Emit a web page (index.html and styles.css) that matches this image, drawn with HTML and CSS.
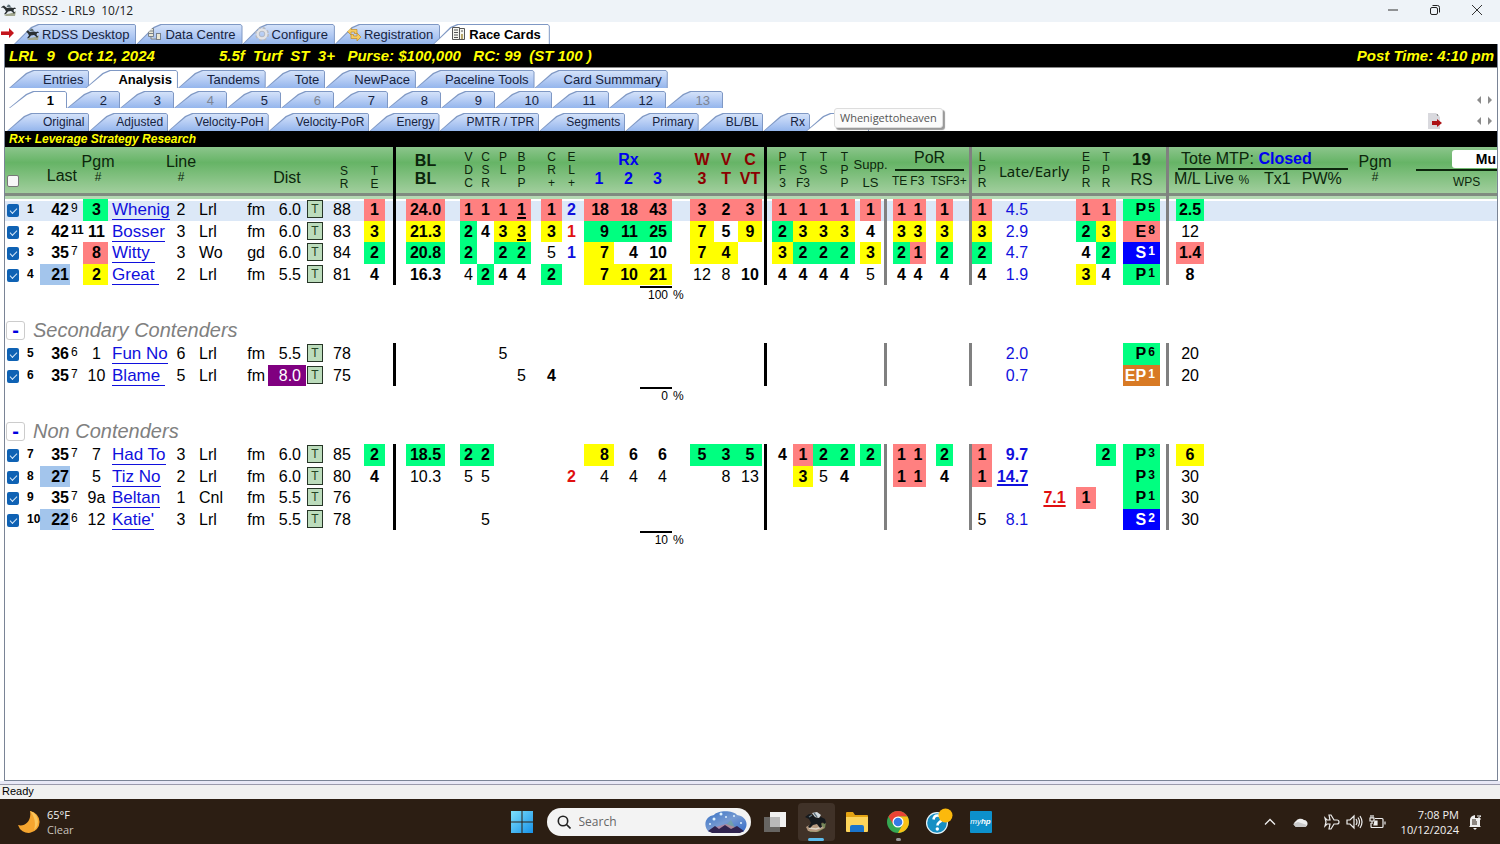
FILE: index.html
```
<!DOCTYPE html>
<html lang="en">
<head>
<meta charset="utf-8">
<title>RDSS2 - LRL9 10/12</title>
<link rel="stylesheet" href="styles.css">
</head>
<body>
<svg class="defs" width="0" height="0" aria-hidden="true">
  <symbol id="horse" viewBox="0 0 16 16">
    <path d="M3 13c3-2 9-1 12-4l-1 5H5z" fill="#a3a88f"/>
    <path d="M1 4.500l2-1 1 1 2 1.500 4-.5 2 .5 2-.5 1 1.500-2 0-.5 2 1.500 1.500-1 1.500-1-1.500-2-1.500-3 .5-2 2.500-2 .3 2-2.800-1-2-2-2-2 .5z" fill="#2b3134"/>
    <path d="M5.500 5l1.500-2.500 2 .5 1 2.500z" fill="#5d6f78"/>
  </symbol>
</svg>
<header class="titlebar">
  <svg class="icon16"><use href="#horse"/></svg>
  <h1 class="titlebar-text">RDSS2 - LRL9&nbsp; 10/12</h1>
  <div class="window-buttons">
    <button class="wbtn" aria-label="Minimize"><svg width="12" height="12" viewBox="0 0 12 12"><path d="M1 6h10" stroke="#333"/></svg></button>
    <button class="wbtn" aria-label="Restore"><svg width="12" height="12" viewBox="0 0 12 12" fill="none" stroke="#222"><rect x="1.500" y="3.500" width="7" height="7" rx="1.500"/><path d="M3.500 1.500h5a2 2 0 0 1 2 2v5"/></svg></button>
    <button class="wbtn" aria-label="Close"><svg width="12" height="12" viewBox="0 0 12 12"><path d="M1 1l10 10M11 1L1 11" stroke="#333"/></svg></button>
  </div>
</header>
<main class="frame">
  <nav class="tabs tabs-main">
    <svg class="go" width="13" height="10" viewBox="0 0 13 10"><path d="M0 3h8V0l5 5-5 5V7H0z" fill="#c3151c"/><path d="M0 3h8v1H0z" fill="#e9797c"/></svg>
    <button class="tab"><svg class="icon16"><use href="#horse"/></svg>RDSS Desktop</button>
    <button class="tab"><svg class="icon16" viewBox="0 0 16 16" fill="#e9e7d5" stroke="#77808c"><path d="M1.500 2.500h5v8h-5zM2 5h4M2 7.500h4M4 11v2h5"/><rect x="9.500" y="7.500" width="4" height="6"/></svg>Data Centre</button>
    <button class="tab"><svg class="icon16" viewBox="0 0 16 16" fill="none"><circle cx="8" cy="8" r="6" stroke="#b7bac1" stroke-width="2" stroke-dasharray="2.800 1.900"/><circle cx="8" cy="8" r="4.300" stroke="#e4e4e6" stroke-width="2.500"/><circle cx="8" cy="8" r="2.800" stroke="#b4b9c4"/></svg>Configure</button>
    <button class="tab"><svg class="icon16" viewBox="0 0 16 16" fill="#f5cc62" stroke="#c18b26" stroke-width=".7"><path d="M1 5l4-4v2.500h6v4H8.500V6H5v3z"/><path d="M15 11l-4 4v-2.500H5v-4h2.500V10H11V7z"/></svg>Registration</button>
    <button class="tab is-active"><svg class="icon16" viewBox="0 0 16 16" fill="#f5f5ef" stroke="#555"><path d="M1.500 1.500h7v12h-7zM8.500 2.500h5v11h-5zM3 4h4M3 6.500h4M3 9h4M3 11.500h4M10 5h2"/><path d="M11 8v5" stroke="#b7a66a" stroke-width="2"/></svg>Race Cards</button>
  </nav>
  <section class="card">
    <div class="racebar"><span>LRL&nbsp; 9&nbsp;&nbsp; Oct 12, 2024</span><span class="race-info">5.5f&nbsp; Turf&nbsp; ST&nbsp; 3+&nbsp;&nbsp; Purse: $100,000&nbsp;&nbsp; RC: 99&nbsp; (ST 100 )</span><span class="post">Post Time: 4:10 pm</span></div>
    <nav class="tabs tabs-section">
      <button class="tab">Entries</button><button class="tab is-active">Analysis</button><button class="tab">Tandems</button><button class="tab">Tote</button><button class="tab">NewPace</button><button class="tab">Paceline Tools</button><button class="tab">Card Summmary</button>
    </nav>
    <nav class="tabs tabs-race">
      <button class="tab is-active">1</button><button class="tab">2</button><button class="tab">3</button><button class="tab is-off">4</button><button class="tab">5</button><button class="tab is-off">6</button><button class="tab">7</button><button class="tab">8</button><button class="tab">9</button><button class="tab wide">10</button><button class="tab wide">11</button><button class="tab wide">12</button><button class="tab wide is-off">13</button>
      <span class="scroll"><svg width="15" height="8" viewBox="0 0 15 8" fill="#8b8b8b"><path d="M4 0v8L0 4zM11 0v8l4-4z"/></svg></span>
    </nav>
    <nav class="tabs tabs-view">
      <button class="tab">Original</button><button class="tab">Adjusted</button><button class="tab">Velocity-PoH</button><button class="tab">Velocity-PoR</button><button class="tab">Energy</button><button class="tab">PMTR / TPR</button><button class="tab">Segments</button><button class="tab">Primary</button><button class="tab">BL/BL</button><button class="tab">Rx</button>
      <div class="tip-anchor"><button class="tab is-active blank" aria-label="Leverage"></button><span class="tooltip" role="tooltip">Whenigettoheaven</span></div>
      <span class="scroll"><svg class="export" width="16" height="18" viewBox="0 0 16 18"><path d="M1 1h8l4 4v12H1z" fill="#d9d9de"/><path d="M10 2l1 2" stroke="#777"/><path d="M5 9h5V7l5 4-5 4v-2H5z" fill="#ad1216"/></svg><svg width="15" height="8" viewBox="0 0 15 8" fill="#8b8b8b"><path d="M4 0v8L0 4zM11 0v8l4-4z"/></svg></span>
    </nav>
    <h2 class="report-title">Rx+ Leverage Strategy Research</h2>
    <div class="sheet">
      <table class="grid">
        <colgroup>
          <col class="w17"><col class="w18"><col class="w30"><col class="w13"><col class="w25"><col class="w62"><col class="w22"><col class="w43"><col class="w33"><col class="w38"><col class="w18"><col class="w40"><col class="w21">
          <col class="w8"><col class="w13"><col class="w39"><col class="w15"><col class="w17"><col class="w17"><col class="w18"><col class="w19"><col class="w10"><col class="w21"><col class="w22"><col class="w30"><col class="w29"><col class="w29"><col class="w18"><col class="w24"><col class="w24"><col class="w24">
          <col class="w2"><col class="w8"><col class="w21"><col class="w20"><col class="w21"><col class="w21"><col class="w5"><col class="w21"><col class="w3"><col class="w9"><col class="w17"><col class="w16"><col class="w10"><col class="w17"><col class="w16"><col class="w23"><col class="w41"><col class="w43"><col class="w20"><col class="w20"><col class="w7"><col class="w37"><col class="w6"><col class="w10"><col class="w28"><col>
        </colgroup>
        <thead>
          <tr>
            <th><input type="checkbox" class="check-all" aria-label="Select all"></th>
            <th colspan="3"><div class="h low last">Last</div></th>
            <th><div class="h name-head">Pgm<small>#</small></div></th>
            <th></th>
            <th><div class="h">Line<small>#</small></div></th>
            <th colspan="2"></th>
            <th><div class="h low">Dist</div></th>
            <th></th>
            <th><div class="h v low">S<br>R</div></th>
            <th><div class="h v low">T<br>E</div></th>
            <th></th><th class="bar"></th>
            <th><div class="h two bl">BL<br>BL</div></th><th></th>
            <th><div class="h v">V<br>D<br>C</div></th>
            <th><div class="h v">C<br>S<br>R</div></th>
            <th><div class="h v">P<br>L</div></th>
            <th><div class="h v">B<br>P<br>P</div></th><th></th>
            <th><div class="h v">C<br>R<br>+</div></th>
            <th><div class="h v el">E<br>L<br>+</div></th>
            <th><div class="h two blue">&nbsp;<br>1</div></th>
            <th><div class="h two blue">Rx<br>2</div></th>
            <th><div class="h two blue">&nbsp;<br>3</div></th><th></th>
            <th><div class="h two maroon">W<br>3</div></th>
            <th><div class="h two maroon">V<br>T</div></th>
            <th><div class="h two maroon">C<br>VT</div></th>
            <th></th><th class="bar"></th>
            <th><div class="h v">P<br>F<br>3</div></th>
            <th><div class="h v">T<br>S<br>F3</div></th>
            <th><div class="h v">T<br>S</div></th>
            <th><div class="h v">T<br>P<br>P</div></th><th></th>
            <th><div class="h supp">Supp.<br>LS</div></th>
            <th></th>
            <th colspan="6"><div class="h por"><span class="por-top">PoR</span><span class="por-sub"><i>TE</i><i>F3</i><i>TSF3+</i></span></div></th>
            <th class="bar soft"><div class="h v">L<br>P<br>R</div></th>
            <th colspan="2"><div class="h late">Late/Early</div></th>
            <th><div class="h v">E<br>P<br>R</div></th>
            <th><div class="h v">T<br>P<br>R</div></th>
            <th></th>
            <th><div class="h rs"><b>19</b>RS</div></th>
            <th></th><th class="bar soft"></th>
            <th colspan="2"><div class="tote">
              <div class="tote-live"><span class="tote-top">Tote MTP: <b>Closed</b></span><span class="tote-sub">M/L Live <small>%</small><i>Tx1</i><i>PW%</i></span></div>
              <div class="h tote-pgm">Pgm<small>#</small></div>
              <div class="multi"><button class="multi-btn">Mu</button><span class="wps">WPS</span></div>
            </div></th>
          </tr>
        </thead>
        <tbody id="contenders"></tbody>
        <tbody id="secondary"></tbody>
        <tbody id="non"></tbody>
      </table>
    </div>
  </section>
</main>
<div class="status">Ready</div>
<footer class="taskbar">
  <div class="weather">
    <svg width="24" height="24" viewBox="0 0 24 24"><path d="M13 1a11 11 0 1 1-12 14c6 2 14-3 12-14z" fill="#f5a52f"/><path d="M13 1a11 11 0 0 1 4 19c2-6 1-13-4-19z" fill="#fbc65c"/></svg>
    <p>65°F<br><span>Clear</span></p>
  </div>
  <div class="apps">
    <button class="app start" aria-label="Start"><svg width="22" height="22" viewBox="0 0 22 22"><defs><linearGradient id="win" x1="0" y1="0" x2="1" y2="1"><stop offset="0" stop-color="#7ee0fb"/><stop offset="1" stop-color="#1791e8"/></linearGradient></defs><path d="M0 0h10.500v10.500H0zM11.500 0H22v10.500H11.500zM0 11.500h10.500V22H0zM11.500 11.500H22V22H11.500z" fill="url(#win)"/></svg></button>
    <label class="search">
      <svg width="14" height="14" viewBox="0 0 14 14" fill="none" stroke="#222" stroke-width="1.600"><circle cx="6" cy="6" r="4.700"/><path d="M9.500 9.500L13.500 13.500"/></svg>
      <input type="text" placeholder="Search" aria-label="Search">
      <svg width="44" height="24" viewBox="0 0 44 24"><defs><linearGradient id="sky" x1="0" y1="0" x2="1" y2="1"><stop offset="0" stop-color="#3570c5"/><stop offset=".5" stop-color="#779ad1"/><stop offset="1" stop-color="#346cc9"/></linearGradient></defs><path d="M5 22C-2 15 2 6 10 5 14 0 29 0 33 5c9 1 13 10 6 17z" fill="url(#sky)"/><path d="M17 20l10-10 5 9z" fill="#77a996" opacity=".6"/><path d="M12 17l10-3 12 4v3H12z" fill="#c58291" opacity=".7"/><path d="M4 21l7-5 4 3 6-4 6 4 6-3 7 5-4 2H8z" fill="#30234f"/><g fill="#dff2ff"><circle cx="10" cy="9" r="1.500"/><circle cx="17" cy="4" r="1.500"/><circle cx="6" cy="14" r="1"/><circle cx="30" cy="6" r="1"/><circle cx="37" cy="13" r="1"/><circle cx="22" cy="7" r="1"/></g></svg>
    </label>
    <button class="app" aria-label="Task view"><svg width="24" height="22" viewBox="0 0 24 22"><rect x="7" y="1" width="16" height="15" fill="#f1f1f1"/><rect x="1" y="6" width="16" height="15" fill="#777" opacity=".8"/><rect x="7" y="6" width="10" height="10" fill="#b9b9b9"/></svg></button>
    <button class="app is-open" aria-label="RDSS2"><svg width="24" height="24" viewBox="0 0 24 24"><path d="M3 18q6-4 10-3l9-3-1 6-7 4H6z" fill="#77885a"/><path d="M2 17l7-4 8 2 3 3-8 4-8-1z" fill="#b59a80"/><path d="M5 18l7 1 6-2" fill="none" stroke="#ded5c6" stroke-width="1.500"/><path d="M1 7l4-3 4 1 3 3 5-1 4 2 1 4-2 1-1-2-2 1 1 4-2 1-3-4-4 1-3 3-2-1 3-4-2-4-2-1z" fill="#15191d"/><path d="M8 3l5-1 4 3-2 3-4-1z" fill="#d3dbe0"/><path d="M10 3l3 4M8 5l-3 2" stroke="#5f737f" stroke-width="1.300"/></svg></button>
    <button class="app" aria-label="File Explorer"><svg width="24" height="22" viewBox="0 0 24 22"><path d="M1 2q0-1 1-1h6l2 3h12q1 0 1 1v5H1z" fill="#e3a313"/><path d="M1 6h22v14q0 1-1 1H2q-1 0-1-1z" fill="#fcd45b"/><path d="M5 21v-5q0-2 2-2h10q2 0 2 2v5z" fill="#1a74cc"/></svg></button>
    <button class="app is-running" aria-label="Chrome"><svg width="24" height="24" viewBox="0 0 24 24"><circle cx="12" cy="12" r="11" fill="#35a852"/><path d="M2.500 6.500A11 11 0 0 1 21.500 6.500H12L7.500 15z" fill="#ea4335"/><path d="M21.500 6.500A11 11 0 0 1 12 23l4.700-8.500L12 6.500z" fill="#fbc116"/><circle cx="12" cy="12" r="5.500" fill="#fff"/><circle cx="12" cy="12" r="4.300" fill="#367be6"/></svg></button>
    <button class="app" aria-label="Help"><svg width="28" height="28" viewBox="0 0 28 28"><circle cx="12" cy="15" r="11" fill="#e9f6fb"/><circle cx="12" cy="15" r="9.800" fill="#168fc4"/><path d="M8.500 11.500q.5-4 4-4 4 0 4 3.500 0 2-2.500 3.500-1.500 1-1.500 3" fill="none" stroke="#fff" stroke-width="2.600"/><circle cx="12.300" cy="21" r="1.700" fill="#fff"/><circle cx="20.500" cy="7.500" r="7" fill="#fcb90c"/></svg></button>
    <button class="app hp" aria-label="myHP">my<b>hp</b></button>
  </div>
  <div class="tray">
    <svg width="12" height="8" viewBox="0 0 12 8"><path d="M1 6.500l5-5 5 5" fill="none" stroke="#eee" stroke-width="1.300"/></svg>
    <svg class="cloud" width="17" height="12" viewBox="0 0 17 12"><path d="M4 11a4 3.500 0 0 1 0-6 5 4 0 0 1 8-1c4 0 5 6 1 7z" fill="#eee"/><path d="M1 8l5-2 9 3-2 2H4z" fill="#c9c9c9"/></svg>
    <svg width="17" height="16" viewBox="0 0 17 16" fill="none" stroke="#eee" stroke-width="1.200"><path d="M2 4l2 2h3L6 1h2l3 5h3q2 0 2 2t-2 2h-3l-3 5H6l1-5H4l-2 2 1-4z"/></svg>
    <svg width="17" height="16" viewBox="0 0 17 16" fill="none" stroke="#eee" stroke-width="1.200"><path d="M1 6h3l4-4v12l-4-4H1zM10 5q2 3 0 6M12 3.500q3 4.500 0 9M14 2q4 6 0 12"/></svg>
    <svg width="17" height="16" viewBox="0 0 17 16" fill="none" stroke="#eee" stroke-width="1.200"><path d="M6 4.500h7q1 0 1 1v7q0 1-1 1H3q-1 0-1-1V9M16 7.500v3"/><path d="M1 4h4v3H1zM2 1v3M4 1v3M3 7v3"/><path d="M6 7h2v4H5z" fill="#eee"/></svg>
    <p class="clock">7:08 PM<br>10/12/2024</p>
    <svg width="14" height="16" viewBox="0 0 14 16"><path d="M2 12V6q0-4 5-5v3h5v8l1 1H1zM5 14h4l-2 2z" fill="#eee"/><path d="M4 8h5M4 6h4M4 10h5" stroke="#2c1e13"/><path d="M9 2h4l-4 3h4" fill="none" stroke="#eee"/></svg>
  </div>
</footer>
<script src="grid.js"></script>
</body>
</html>
```
FILE: styles.css
```
* { box-sizing: border-box; }
body { margin: 0; min-height: 100vh; display: flex; flex-direction: column; background: #fff; color: #000; font-family: "Liberation Sans", Arial, sans-serif; font-size: 13px; overflow: hidden; }
button { font: inherit; color: inherit; border: 0; background: none; padding: 0; }
p, h1, h2 { margin: 0; font-weight: normal; }
.defs { position: absolute; }
.icon16 { width: 16px; height: 16px; flex: none; }

.titlebar { display: flex; align-items: center; height: 22px; padding: 0 17px 2px 1px; gap: 5px; background: #eef3f8; }
.titlebar-text { font: 12px "Open Sans", sans-serif; color: #222; }
.window-buttons { display: flex; gap: 30px; margin-left: auto; }
.wbtn { display: flex; }

.frame { flex: 1; display: flex; flex-direction: column; }
.tabs { display: flex; align-items: flex-end; }
.tab { position: relative; z-index: 0; flex: none; display: flex; align-items: center; justify-content: flex-end; gap: 2px; height: 18px; padding: 0 6px 0 29px; color: #16233f; white-space: nowrap; background: #7f98c4; clip-path: polygon(0 100%, 17px 3px, 24px 0, calc(100% - 2px) 0, 100% 2px, 100% 100%); }
.tab::before { content: ""; position: absolute; z-index: -1; inset: 1px 1px 0 1px; background: linear-gradient(#d4e2f9, #b5ccf4 50%, #94b5ec); clip-path: polygon(0 100%, 17px 3px, 24px 0, calc(100% - 1px) 0, 100% 1px, 100% 100%); }
.tab.is-active { z-index: 1; margin-left: -4px; font-weight: bold; color: #000; }
.tab.is-active::before { background: #fff; }
.tab.is-off { color: #7d8594; }
.tabs-main { height: 22px; padding-left: 1px; }
.tabs-main .tab { height: 20px; padding: 0 7px 0 11px; }
.tabs-main .tab:nth-of-type(1) { padding-left: 10px; }
.tabs-main .tab.is-active { margin-left: -7px; padding: 0 9px 0 18px; }
.go { align-self: center; }
.card { flex: 1; display: flex; flex-direction: column; margin: 0 2px 0 4px; border: 1px solid #7a8496; border-top: 0; }
.racebar { display: flex; align-items: center; height: 24px; padding: 0 3px 1px 4px; background: #000; border-bottom: 1px solid #888; color: #ff0; font-size: 15px; font-weight: bold; font-style: italic; white-space: nowrap; }
.race-info { margin-left: 64px; }
.post { margin-left: auto; }
.tabs-section { height: 20px; padding-left: 4px; }
.tabs-section .tab:first-child { padding-left: 34px; }
.tabs-section .tab.is-active { padding-left: 33px; }
.tabs-race { height: 20px; padding-left: 4px; }
.tabs-race .tab { width: 53px; height: 17px; padding: 1px 13px 0 0; }
.tabs-race .tab:nth-child(odd) { width: 54px; }
.tabs-race .tab.is-active { width: 58px; margin-left: 0; }
.tabs-race .tab.wide { width: 57px; }
.tabs-view { height: 23px; padding-left: 2px; font-size: 12px; }
.tabs-view .tab { padding: 0 5px 0 27px; }
.tabs-view .tab:first-child { padding-left: 36px; }
.tabs-view .blank { width: 63px; }
.tip-anchor { position: relative; }
.tooltip { position: absolute; z-index: 3; left: 24px; top: -5px; padding: 0 5px; font: 11px/18px "Open Sans", sans-serif; color: #555; background: #fbfbfb; border: 1px solid #ddd; border-radius: 3px; box-shadow: 2px 2px 1px #999; }
.scroll { display: flex; align-items: center; align-self: center; gap: 34px; margin-left: auto; padding: 3px 5px 0 0; }
.report-title { height: 16px; padding-left: 4px; background: #000; color: #ff0; font-size: 12px; line-height: 16px; font-weight: bold; font-style: italic; }

.sheet { flex: 1; overflow: hidden; }
.grid { width: 100%; table-layout: fixed; border-collapse: separate; border-spacing: 0; font-size: 16px; }
.w2 { width: 2px; } .w3 { width: 3px; } .w5 { width: 5px; } .w6 { width: 6px; } .w7 { width: 7px; } .w8 { width: 8px; } .w9 { width: 9px; } .w10 { width: 10px; }
.w13 { width: 13px; } .w15 { width: 15px; } .w16 { width: 16px; } .w17 { width: 17px; } .w18 { width: 18px; } .w19 { width: 19px; } .w20 { width: 20px; }
.w21 { width: 21px; } .w22 { width: 22px; } .w23 { width: 23px; } .w24 { width: 24px; } .w25 { width: 25px; } .w28 { width: 28px; } .w29 { width: 29px; }
.w30 { width: 30px; } .w33 { width: 33px; } .w37 { width: 37px; } .w38 { width: 38px; } .w39 { width: 39px; } .w40 { width: 40px; } .w41 { width: 41px; } .w43 { width: 43px; } .w62 { width: 62px; }

.grid thead tr { background: linear-gradient(#8cc58c, #66b466 30%, #a3cf9f 90%, #a3cf9f); }
.grid th { height: 52px; padding: 2px 0 5px; vertical-align: top; font-weight: normal; box-shadow: inset 0 -3px #b5d8b3, inset 0 -6px #808b80; }
.h { height: 44px; display: flex; flex-direction: column; align-items: center; line-height: 18px; white-space: nowrap; color: #0c260c; }
.h small { font-size: 12px; line-height: 12px; }
.grid th:nth-child(3) .h, .grid th:nth-child(5) .h, .tote-pgm { padding-top: 4px; }
.low { justify-content: flex-end; padding-bottom: 6px; }
.last { align-items: flex-end; padding: 0 6px 8px 0; }
.name-head { padding-left: 5px; }
.v { display: block; padding-top: 2px; text-align: center; font-size: 12px; line-height: 13px; }
.v.low { padding-top: 16px; }
.el { padding-right: 3px; }
.two { display: block; padding-top: 1px; text-align: center; font-weight: bold; line-height: 19px; }
.bl { padding-top: 3px; line-height: 18px; }
.blue { color: #0000f0; }
.maroon { color: #8b0000; }
.supp { padding-top: 7px; font-size: 13px; }
.por { align-items: stretch; padding-left: 8px; }
.por-top { height: 22px; margin: 0 5px 0 3px; border-bottom: 2px solid #0c260c; text-align: center; }
.por-sub { display: flex; gap: 3px; font-size: 12px; line-height: 20px; }
.por-sub i, .tote-sub i { font-style: normal; }
.por-sub i + i + i { margin-left: 3px; }
.late { font-family: "Noto Sans", sans-serif; font-size: 15px; justify-content: center; }
.rs { padding-top: 1px; line-height: 20px; }
.rs b { font-size: 17px; }
.tote { display: flex; height: 44px; white-space: nowrap; color: #0c260c; line-height: 18px; text-align: left; }
.tote-live { width: 178px; margin-left: -2px; flex: none; }
.tote-top { display: block; height: 21px; width: 170px; margin-left: 4px; padding: 1px 0 0 3px; border-bottom: 2px solid #0c260c; }
.tote-top b { color: #0000f0; }
.tote-sub small { font-size: 12px; }
.tote-sub i { margin-left: 15px; }
.tote-sub i + i { margin-left: 11px; }
.tote-pgm { width: 46px; flex: none; }
.multi { margin-left: auto; width: 81px; flex: none; }
.multi-btn { display: block; width: 45px; height: 18px; margin: 1px 0 0 36px; padding: 0 1px 0 0; border-radius: 3px 0 0 3px; background: #fff; color: #000; font-size: 14px; font-weight: bold; text-align: right; }
.wps { display: block; margin-top: 1px; padding: 2px 0 0 37px; border-top: 2px solid #0c260c; font-size: 12px; }

.check-all { display: block; width: 12px; height: 12px; margin: 26px 0 0 2px; appearance: none; border: 1px solid #777; border-radius: 2px; background: #f7f7f7; }
.pick { position: relative; display: block; width: 12px; height: 13px; margin: 4px 0 0 2px; appearance: none; border-radius: 2px; background: #0f62b4; }
.pick::after { content: ""; position: absolute; left: 3px; top: 4px; width: 6px; height: 3px; border: solid #d7e8f8; border-width: 0 0 1px 1px; transform: rotate(-45deg); }

.row td { height: 22px; padding: 1px 0 0; line-height: 20px; text-align: center; white-space: nowrap; vertical-align: top; }
.row.short td { height: 21px; }
.row.current { background: linear-gradient(#fff 2px, #dce8f7 2px); }
.grid .ord { font-size: 12px; font-weight: bold; text-align: left; padding-left: 5px; line-height: 19px; }
.grid .last-num { text-align: right; padding-right: 1px; font-weight: bold; }
.grid .last-num.long { background: #a3c5ec; }
.grid .days { font-size: 12px; line-height: 16px; text-align: left; padding-left: 1px; }
.grid .days.heavy { font-weight: bold; }
.grid .pgm { padding-left: 2px; }
.grid .name { text-align: left; padding-left: 4px; font-size: 17px; }
.name a { display: block; width: max-content; color: #1010dd; text-decoration: none; border-bottom: 1px solid #1010dd; line-height: 19px; white-space: pre; }
.grid .track { text-align: left; padding-left: 7px; }
.grid .cond { text-align: right; padding-right: 3px; }
.grid .dist { text-align: right; padding-right: 5px; }
.dist.purple { background: #800080; color: #fff; }
.surface { display: block; width: 16px; height: 18px; margin: 0 0 0 1px; border: 1px solid #263526; background: #bcdcbc; color: #264626; font-size: 12px; line-height: 16px; }
.grid .sr { padding-right: 4px; }
.grid .rx, .grid .live { text-align: right; padding-right: 5px; }
.grid .el-data { padding-right: 3px; }
.bar { border-left: 3px solid #000; background-clip: padding-box; }
.bar.soft { border-left-color: #808080; }
.grid th.bar { background-clip: border-box; }
.red, .green, .yellow, .bold, .navy, .crimson { font-weight: bold; }
.red { background-color: #ff8080; }
.green { background-color: #00ff80; }
.yellow { background-color: #ff0; }
.navy, .thin-blue { color: #1010dd; }
.crimson { color: #e01010; }
.ul { text-decoration: underline; text-decoration-thickness: 2px; text-underline-offset: 2px; }
.grid .style { text-align: right; padding-right: 3px; font-weight: bold; }
.style sup { display: inline-block; width: 11px; font-size: 12px; line-height: 12px; vertical-align: 3px; text-align: center; }
.style.royal { background: #00f; color: #fff; }
.style.orange { background: #d87a24; color: #fff; }
.sum td { height: 20px; padding: 1px 0 0; font-size: 12px; line-height: 14px; vertical-align: top; }
.sum-value { display: block; width: 32px; margin-left: auto; padding-right: 4px; border-top: 2px solid #000; text-align: right; }
.sum .pct { padding: 3px 0 0 1px; }
.group-head td { height: 38px; padding: 0 0 1px; vertical-align: bottom; }
.group-line { display: flex; align-items: center; gap: 8px; color: #808080; font-size: 20px; font-style: italic; line-height: 24px; }
.toggle { width: 19px; height: 19px; margin-left: 1px; border: 1px solid #ccc; border-radius: 3px; color: #0000e0; font: bold 20px/14px "Liberation Sans", sans-serif; }

.status { height: 18px; padding-left: 2px; border-top: 3px solid #e8e8f6; background: #f0f0f0; box-shadow: inset 0 1px #9a9aac; font-size: 11px; line-height: 14px; }
.taskbar { display: grid; grid-template-columns: 1fr auto 1fr; align-items: center; height: 45px; padding: 0 18px 0 17px; background: #2c1e13; color: #f2f2f2; font: 11px/15px "Open Sans", sans-serif; }
.weather { display: flex; align-items: center; gap: 6px; }
.weather span { color: #c9c2bc; }
.apps { display: flex; align-items: center; gap: 4px; margin-right: 4px; }
.app { position: relative; display: flex; align-items: center; justify-content: center; width: 37px; height: 38px; border-radius: 4px; }
.start { margin-right: 2px; }
.search { display: flex; align-items: center; gap: 8px; width: 204px; height: 28px; margin-right: 2px; padding: 0 3px 0 10px; border-radius: 14px; background: #f3f3f3; }
.search input { flex: 1; min-width: 0; border: 0; background: none; padding: 0; font: 12px "Open Sans", sans-serif; }
.search input::placeholder { color: #666; opacity: 1; }
.is-open { background: #403228; }
.is-open::after, .is-running::after { content: ""; position: absolute; bottom: 0; width: 16px; height: 3px; border-radius: 2px; background: #5cbcec; }
.is-running::after { width: 5px; background: #999; }
.hp { width: 22px; height: 22px; margin-left: 8px; border-radius: 1px; background: #0d90cb; color: #fff; font: italic 8px "Liberation Sans", sans-serif; }
.tray { display: flex; align-items: center; justify-content: flex-end; gap: 6px; }
.cloud { margin: 0 8px 0 10px; }
.clock { margin: 0 3px 0 9px; text-align: right; }
```
FILE: grid.js
```
// Stat columns in display order; null is an empty gap column.
const STAT_COLUMNS = [
  null, "bar", "", null, "", "", "", "", null, "", "el-data", "rx", "rx", "rx", null, "", "", "",
  null, "bar", "", "", "", "", null, "", null, "bar soft", "", "", null, "", null,
  "bar soft stat", "live", "early", "", "", null, "style", null, "bar soft", "", null
];
// Prefix letter of a token gives its shade.
const SHADES = { r: "red", g: "green", y: "yellow", b: "bold", n: "", B: "navy", t: "thin-blue", R: "crimson", k: "royal", o: "orange" };

const RACE = {
  contenders: { percent: "100", rows: [
    [1, "42", "9", "g3", "Whenig", 2, "Lrl", "fm", "6.0", 88, "r1", "r24.0 r1 r1 r1 r1_ r1 B2 r18 r18 r43 r3 r2 r3 r1 r1 r1 r1 r1 r1 r1 r1 r1 t4.5 - r1 r1 gP5 g2.5"],
    [2, "42", "11", "b11", "Bosser", 3, "Lrl", "fm", "6.0", 83, "y3", "y21.3 g2 b4 y3 y3_ y3 R1 g9 g11 g25 y7 b5 y9 g2 y3 y3 y3 b4 y3 y3 y3 y3 t2.9 - g2 y3 rE8 n12"],
    [3, "35", "7", "r8", "Witty ", 3, "Wo", "gd", "6.0", 84, "g2", "g20.8 g2 - g2 g2 n5 B1 y7 b4 b10 y7 y4 - y3 g2 g2 g2 y3 g2 r1 g2 g2 t4.7 - b4 g2 kS1 r1.4"],
    [4, "21", "", "y2", "Great ", 2, "Lrl", "fm", "5.5", 81, "b4", "b16.3 n4 g2 b4 b4 g2 - y7 y10 y21 n12 n8 b10 b4 b4 b4 b4 n5 b4 b4 b4 b4 t1.9 - y3 b4 gP1 b8"]
  ] },
  secondary: { title: "Secondary Contenders", percent: "0", rows: [
    [5, "36", "6", "n1", "Fun No", 6, "Lrl", "fm", "5.5", 78, "-", "- - - n5 - - - - - - - - - - - - - - - - - - t2.0 - - - gP6 n20"],
    [6, "35", "7", "n10", "Blame ", 5, "Lrl", "fm", "8.0", 75, "-", "- - - - n5 b4 - - - - - - - - - - - - - - - - t0.7 - - - oEP1 n20"]
  ] },
  non: { title: "Non Contenders", percent: "10", rows: [
    [7, "35", "7", "n7", "Had To", 3, "Lrl", "fm", "6.0", 85, "g2", "g18.5 g2 g2 - - - - y8 b6 b6 g5 g3 g5 b4 r1 g2 g2 g2 r1 r1 g2 r1 B9.7 - - g2 gP3 y6"],
    [8, "27", "", "n5", "Tiz No", 2, "Lrl", "fm", "6.0", 80, "b4", "n10.3 n5 n5 - - - R2 n4 n4 n4 - n8 n13 - y3 n5 b4 - r1 r1 b4 r1 B14.7_ - - - gP3 n30"],
    [9, "35", "7", "n9a", "Beltan", 1, "Cnl", "fm", "5.5", 76, "-", "- - - - - - - - - - - - - - - - - - - - - - - R7.1_ r1 - gP1 n30"],
    [10, "22", "6", "n12", "Katie'", 3, "Lrl", "fm", "5.5", 78, "-", "- - n5 - - - - - - - - - - - - - - - - - - n5 t8.1 - - - kS2 n30"]
  ] }
};

function cell(cls, token) {
  if (!token || token === "-") return `<td class="${cls}"></td>`;
  const under = token.endsWith("_");
  let text = token.slice(1, under ? -1 : undefined);
  if (cls === "style") text = `${text.slice(0, -1)}<sup>${text.slice(-1)}</sup>`;
  if (under) text = `<span class="ul">${text}</span>`;
  return `<td class="${cls} ${SHADES[token[0]]}">${text}</td>`;
}

function row(data, index) {
  const [ord, last, days, pgm, name, line, track, cond, dist, sr, te, stats] = data;
  const tokens = stats.split(" ");
  let next = 0;
  const statCells = STAT_COLUMNS.map(col => {
    if (col === null || col === "bar" || col === "bar soft") return cell(col || "", "-");
    return cell(col, tokens[next++]);
  }).join("");
  return `<tr class="row${index % 2 ? " short" : ""}${ord === 1 ? " current" : ""}">
    <td><input type="checkbox" class="pick" aria-label="Use horse ${ord}" checked></td>
    <td class="ord">${ord}</td>
    <td class="last-num${+last < 30 ? " long" : ""}">${last}</td>
    <td class="days${days.length > 1 ? " heavy" : ""}">${days}</td>
    ${cell("pgm", pgm)}
    <td class="name"><a href="#">${name}</a></td>
    <td>${line}</td><td class="track">${track}</td><td class="cond">${cond}</td>
    <td class="dist${dist === "8.0" ? " purple" : ""}">${dist}</td>
    <td><span class="surface">T</span></td><td class="sr">${sr}</td>
    ${cell("", te)}${statCells}</tr>`;
}

for (const [id, group] of Object.entries(RACE)) {
  const head = group.title
    ? `<tr class="group-head"><td colspan="57"><div class="group-line"><button class="toggle" aria-label="Collapse">-</button>${group.title}</div></td></tr>`
    : "";
  const sum = `<tr class="sum"><td colspan="25"></td><td colspan="2"><span class="sum-value">${group.percent}</span></td><td class="pct">%</td><td colspan="29"></td></tr>`;
  document.getElementById(id).innerHTML = head + group.rows.map(row).join("") + sum;
}
```
